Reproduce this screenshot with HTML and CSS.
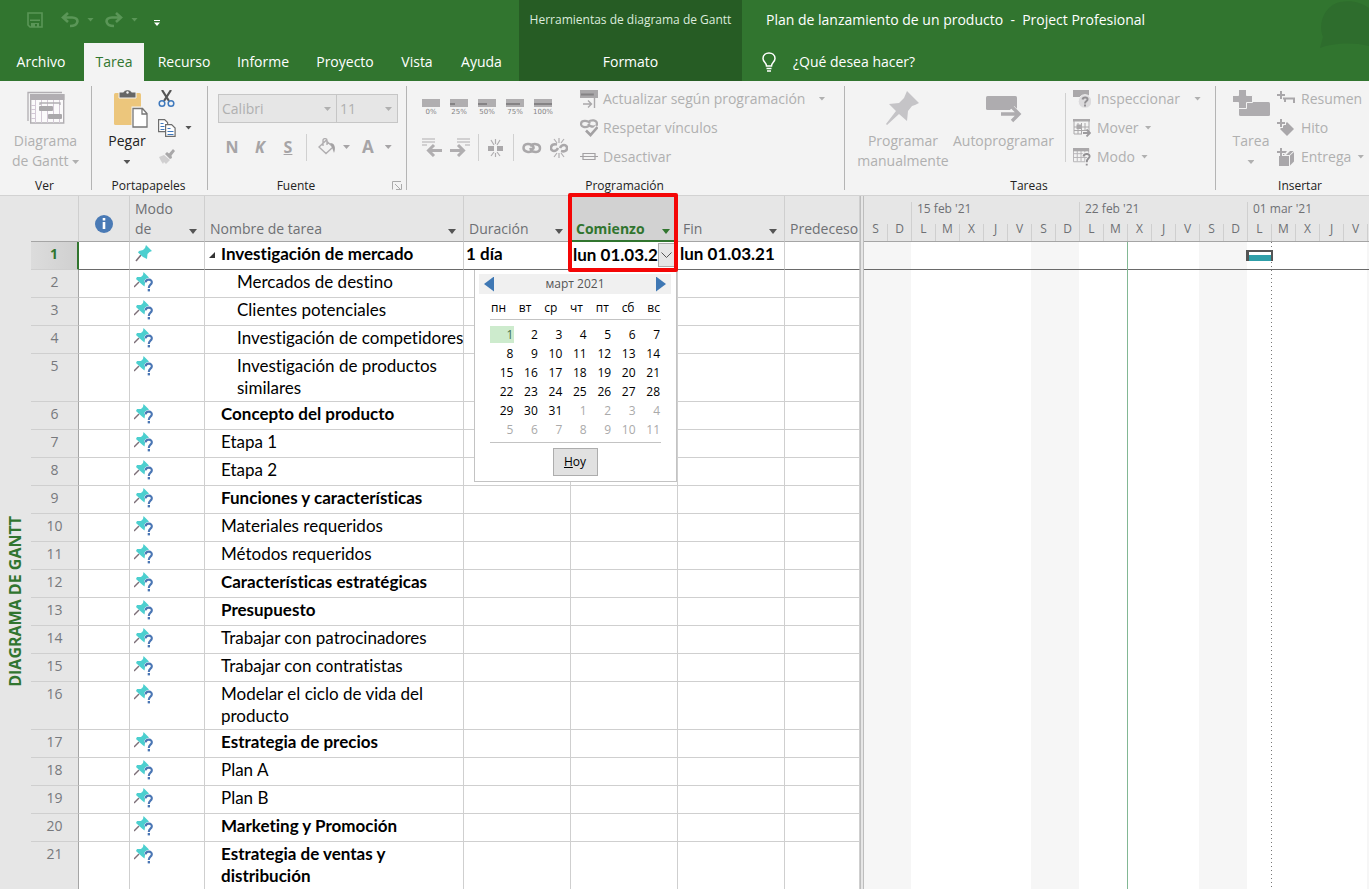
FILE: index.html
```html
<!DOCTYPE html>
<html lang="es">
<head>
<meta charset="utf-8">
<title>Plan de lanzamiento de un producto - Project Profesional</title>
<link rel="stylesheet" href="styles.css">
</head>
<body>
<svg class="defs" aria-hidden="true">
  <symbol id="pin" viewBox="0 0 34 34"><path d="M21 0L33 12L29 14L26 15L22 20L21 30L13 23L1 34L0 33L10 20L3 13L13 12L18 7Z"/></symbol>
  <symbol id="pinhead" viewBox="0 0 17 17"><path d="M1 16L6 10" stroke="#7d6f78" stroke-width="1.600"/><path fill="#4ccfcf" d="M11 0L17 6L14.500 7L12.500 9L12 14L8 12L3 7.500L4 6L8 5L10 3Z"/></symbol>
  <symbol id="pinq" viewBox="0 0 20 20"><path d="M0 15L5 10" stroke="#7d6f78" stroke-width="1.400"/><path fill="#4ccfcf" d="M9.500 0L15 5.500L12.500 7L11.500 8L10.500 14.500L8 12.500L2 7L3 5L7 5L9 3Z"/><path d="M11.500 10.300C12 6.500 18.300 7 17.800 10.500C17.500 13 14.800 12.500 14.800 16" fill="none" stroke="#fff" stroke-width="3"/><path d="M11.500 10.300C12 6.500 18.300 7 17.800 10.500C17.500 13 14.800 12.500 14.800 16" fill="none" stroke="#4a76b4" stroke-width="2.100"/><path fill="#4a76b4" d="M13.700 17h2.300v2.400h-2.300z"/></symbol>
</svg>

<header class="titlebar">
  <div class="bar-left">
    <div class="quick">
      <button class="q-save" aria-label="Guardar"><svg width="16" height="16" viewBox="0 0 16 16"><path fill="none" stroke="currentColor" stroke-width="1.600" d="M1 1h14v14H3L1 13z"/><path fill="currentColor" d="M3 7.500h10V9H3zM4 11h8v4h-2v-3H8v3H4z"/></svg></button>
      <button class="q-undo" aria-label="Deshacer"><svg width="18" height="16" viewBox="0 0 18 16"><path fill="none" stroke="currentColor" stroke-width="2.600" d="M7 1L2 5.500L7 10M2 5.500H11C19 5.500 18 14 9 14"/></svg><i class="caret"></i></button>
      <button class="q-redo" aria-label="Rehacer"><svg width="18" height="16" viewBox="0 0 18 16"><path fill="none" stroke="currentColor" stroke-width="2.600" d="M11 1L16 5.500L11 10M16 5.500H7C-1 5.500 0 14 9 14"/></svg><i class="caret"></i></button>
      <button class="q-more" aria-label="Personalizar"><svg width="6" height="6" viewBox="0 0 6 6"><path fill="#fff" d="M0 0h6v1H0zM0 2.500h6L3 6z"/></svg></button>
    </div>
    <nav class="tabs">
      <button class="tab t-file">Archivo</button>
      <button class="tab t-task active">Tarea</button>
      <button class="tab t-res">Recurso</button>
      <button class="tab t-inf">Informe</button>
      <button class="tab t-pro">Proyecto</button>
      <button class="tab t-vis">Vista</button>
      <button class="tab t-help">Ayuda</button>
    </nav>
  </div>
  <div class="context">
    <span class="context-title">Herramientas de diagrama de Gantt</span>
    <button class="tab">Formato</button>
  </div>
  <div class="bar-right">
    <h1 class="doc-title">Plan de lanzamiento de un producto&nbsp; -&nbsp; Project Profesional</h1>
    <button class="tell"><svg width="14" height="20" viewBox="0 0 14 20"><path fill="none" stroke="#fff" stroke-width="1.500" d="M4.500 14C4.500 10.500 1 10 1 6.500C1 -1 13 -1 13 6.500C13 10 9.500 10.500 9.500 14zM4.500 16.500h5M5 19h4"/></svg>¿Qué desea hacer?</button>
    <svg class="blob" width="51" height="52" viewBox="0 0 51 52"><path fill="#2e6d2d" d="M2 48L5 37C-1 22 8 5 22 2C34 0 42 2 51 8V46C36 42 14 43 2 48z"/></svg>
  </div>
</header>

<section class="ribbon" aria-label="Cinta de opciones">
  <div class="group g-view">
    <div class="tools">
      <button class="big off"><svg width="38" height="36" viewBox="0 0 38 36"><path fill="none" stroke="#b1aeb2" stroke-width="1.300" d="M35 1.500H1V30"/><path fill="#fbfafb" stroke="#b1aeb2" stroke-width="1.400" d="M3.700 4h33v28h-33z"/><path fill="#b1aeb2" d="M3 3h34.500v6H3z"/><path fill="none" stroke="#d3c9d6" d="M4 14.500h4M4 18.500h4M4 22.500h4M4 27.500h4M8.500 9v23M14.500 9v23M20.500 9v23M26.500 9v23M32.500 9v23"/><path fill="none" stroke="#b1aeb2" stroke-width="1.300" d="M13 14v-2h20v2"/><rect x="12" y="15" width="14" height="5" rx="1" fill="#aaa8ab"/><rect x="21" y="23" width="14" height="5" rx="1" fill="#aaa8ab"/></svg><span>Diagrama<br>de Gantt <i class="caret"></i></span></button>
    </div>
    <h2>Ver</h2>
  </div>
  <div class="group g-clip">
    <div class="tools">
      <button class="big"><svg width="36" height="40" viewBox="0 0 36 40"><rect x="1" y="3" width="27" height="32" rx="1.500" fill="#ecc67c"/><path fill="#666" stroke="#f3f3f3" d="M6 2h4.500C11-1 18-1 18.500 2H23v6H6z"/><circle cx="14.500" cy="2.500" r="1.200" fill="#f3f3f3"/><path fill="#fff" stroke="#f3f3f3" stroke-width="3" d="M20 18h9.500l5 5v14H20z"/><path fill="#fff" stroke="#767676" stroke-width="1.300" d="M20 18.500h9.500l4.500 5V37H20zM29 18.500V24h5"/></svg><span>Pegar<br><i class="caret"></i></span></button>
      <div class="stack">
        <button class="small" aria-label="Cortar"><svg width="17" height="18" viewBox="0 0 17 18"><path fill="none" stroke="#555" stroke-width="2.200" d="M4 0L11 11M13 0L6 11"/><g fill="#f3f3f3" stroke="#3f79bd" stroke-width="1.500"><circle cx="4" cy="13.500" r="2.800"/><circle cx="13" cy="13.500" r="2.800"/></g></svg></button>
        <button class="small" aria-label="Copiar"><svg width="18" height="18" viewBox="0 0 18 18"><g fill="#fff" stroke="#6d6d6d" stroke-width="1.200"><path d="M.600.600h6l3 3v9h-9z"/><path d="M7.600 5.600h6l3.500 3.500v8.300H7.600z"/></g><path stroke="#3f79bd" d="M2.500 4.500h3M2.500 7.500h4M2.500 10.500h4M9.500 9.500h3M9.500 12.500h6M9.500 15.500h6"/></svg><i class="caret"></i></button>
        <button class="small" aria-label="Copiar formato"><svg width="17" height="17" viewBox="0 0 17 17"><path fill="#d0cfd0" d="M1 9L6 7L12 12L8 16L6 14L5 16L3 13z"/><path fill="#a9a8a9" d="M7 6L9 4L11 5.500L15 1L17 3L13.500 7.500L14 10L12 11z"/></svg></button>
      </div>
    </div>
    <h2>Portapapeles</h2>
  </div>
  <div class="group g-font">
    <div class="tools">
      <div class="combos">
        <label class="combo c-name"><select disabled aria-label="Fuente"><option>Calibri</option></select><i class="caret"></i></label>
        <label class="combo c-size"><select disabled aria-label="Tamaño"><option>11</option></select><i class="caret"></i></label>
      </div>
      <div class="fmt off">
        <button class="f-let">N</button><button class="f-let it">K</button><button class="f-let un">S</button>
        <span class="sep"></span>
        <button class="f-wide" aria-label="Color de fondo"><svg width="18" height="18" viewBox="0 0 18 18"><path fill="none" stroke="#b0aeb0" stroke-width="1.400" d="M8 2.500L15 9L8 15.500L1 9zM5 8V2.500C5 0 9 0 9 2.500V7"/><path fill="#a3a1a3" d="M12 5C17 5 18 10 16 15C15 12 14 9 12 5z"/></svg><i class="caret"></i></button>
        <button class="f-wide f-a">A<i class="caret"></i></button>
      </div>
    </div>
    <h2>Fuente</h2>
    <button class="launch" aria-label="Opciones de fuente"><svg width="10" height="9" viewBox="0 0 10 9"><path fill="none" stroke="#aaa" d="M.500 8.500V.500H9M3 3l5 5M9.500 3v5.500H4"/></svg></button>
  </div>
  <div class="group g-prog">
    <div class="tools">
      <div class="prog-left off">
        <div class="pcts">
          <button class="pct">0%</button><button class="pct p25">25%</button><button class="pct p50">50%</button><button class="pct p75">75%</button><button class="pct p100">100%</button>
        </div>
        <div class="links">
          <button aria-label="Anular sangría"><svg width="20" height="19" viewBox="0 0 20 19"><path stroke="#b0aeb0" stroke-width="1.200" d="M0 1h13M0 4h13M0 7h5"/><path fill="none" stroke="#b0aeb0" stroke-width="3" d="M12 7L6.500 12.500L12 18M7 12.500H20"/></svg></button>
          <button aria-label="Aplicar sangría"><svg width="20" height="19" viewBox="0 0 20 19"><path stroke="#b0aeb0" stroke-width="1.200" d="M7 1h13M7 4h13M15 7h5"/><path fill="none" stroke="#b0aeb0" stroke-width="3" d="M8 7L13.500 12.500L8 18M13 12.500H0"/></svg></button>
          <span class="sep"></span>
          <button aria-label="Dividir tarea"><svg width="18" height="18" viewBox="0 0 18 18"><path fill="#aaa8aa" d="M1 7h6v5H1zM10 7h6v5h-6z"/><path fill="none" stroke="#b0aeb0" stroke-width="1.200" d="M8.500 0v5M4 1l3 5M13 1l-3 5M8.500 14v4M4 17l3-4M13 17l-3-4"/></svg></button>
          <span class="sep"></span>
          <button aria-label="Vincular tareas"><svg width="20" height="12" viewBox="0 0 20 12"><path fill="none" stroke="#aaa8aa" stroke-width="2.500" d="M11 8.500C8 11 1.500 10 1.500 6C1.500 1 9 .500 11.500 5C12 7 9 8 8 6M8 4C11 1 18 1.500 18 6C18 11 11 11.500 8.500 7"/></svg></button>
          <button aria-label="Desvincular tareas"><svg width="18" height="20" viewBox="0 0 18 20"><path fill="none" stroke="#aaa8aa" stroke-width="2.600" d="M7 6.500C-.500 5-.500 13 4 13C6 13 7 12 8 10M11 13C18.500 15 18.500 7 14 7C12 7 11 8 10 10"/><path fill="none" stroke="#b0aeb0" stroke-width="1.200" d="M9 0v5M4 1l3 4M14 1l-3 4M9 15v5M4 19l3-4M14 19l-3-4"/></svg></button>
        </div>
      </div>
      <div class="rows off">
        <button class="line"><svg width="18" height="18" viewBox="0 0 18 18"><path fill="#aaa8aa" d="M0 0h18v8H0z"/><path fill="none" stroke="#858385" stroke-width="2" d="M1 4.500h14"/><path fill="none" stroke="#aaa8aa" stroke-width="1.400" d="M14.500 0v18M3 14h8M8 10.500L11.500 14L8 17.500"/></svg>Actualizar según programación<i class="caret far"></i></button>
        <button class="line"><svg width="18" height="18" viewBox="0 0 18 18"><path fill="none" stroke="#aaa8aa" stroke-width="2.200" d="M9 7C5 9 1 8 1 5C1 1 8 1 10 4.500M8 3C11 .500 17 .500 17 5C17 8 11 9 8 5"/><path fill="none" stroke="#f3f3f3" stroke-width="5" d="M7 12L10.500 15.500L17.500 8"/><path fill="none" stroke="#a3a1a3" stroke-width="2.600" d="M6 11.500L10.500 16L17.500 8"/></svg>Respetar vínculos</button>
        <button class="line"><svg width="18" height="18" viewBox="0 0 18 18"><path fill="none" stroke="#a3a1a3" stroke-width="1.200" d="M3 5.500h12v6H3zM0 8.500h18"/></svg>Desactivar</button>
      </div>
    </div>
    <h2>Programación</h2>
  </div>
  <div class="group g-tasks">
    <div class="tools">
      <button class="big off b-manual"><svg width="34" height="36" viewBox="0 0 34 36" fill="#c5c4c7"><use href="#pin" y="0" width="34" height="34"/></svg><span>Programar<br>manualmente</span></button>
      <button class="big off b-auto"><svg width="36" height="36" viewBox="0 0 36 36"><rect x="0" y="5" width="31" height="14" rx="1.500" fill="#aeacaf"/><path fill="none" stroke="#f3f3f3" stroke-width="6" d="M14 23h18M26 17l6 6l-6 6"/><path fill="none" stroke="#aeacaf" stroke-width="3.400" d="M15 23h18M26 16l7 7l-7 7"/></svg><span>Autoprogramar</span></button>
      <span class="sep tall"></span>
      <div class="rows off">
        <button class="line"><svg width="18" height="18" viewBox="0 0 18 18"><path fill="#aaa8aa" d="M0 0h16v7H0z"/><circle cx="12" cy="11.500" r="6.800" fill="#dcdbdd" stroke="#f3f3f3"/><path fill="none" stroke="#929093" stroke-width="2" d="M9.500 9.500C10 6.500 15 7 14.500 9.500C14.500 11 12 11 12 13.500M12 14.500v2"/></svg>Inspeccionar<i class="caret far"></i></button>
        <button class="line"><svg width="18" height="18" viewBox="0 0 18 18"><path fill="none" stroke="#aaa8aa" d="M1 1h15v14H1zM1 8h15M1 11.500h15M5 4v11M8.500 4v11M12 4v11"/><path fill="#aaa8aa" d="M0 0h17v2.500H0zM3.500 5.500h4.500V10H3.500z"/><path fill="none" stroke="#f3f3f3" stroke-width="4" d="M9 14h7"/><path fill="none" stroke="#9d9b9e" stroke-width="1.800" d="M10 14h7M13.500 10.500L17 14L13.500 17.500"/></svg>Mover<i class="caret"></i></button>
        <button class="line"><svg width="18" height="18" viewBox="0 0 19 19"><path fill="none" stroke="#b5b3b6" d="M.500 1h16v13.500H.500zM.500 6h16M.500 10h16M4.500 3v11M8.500 3v11M12.500 3v11"/><path fill="#aaa8aa" d="M0 0h17v3.500H0z"/><path fill="none" stroke="#f3f3f3" stroke-width="4" d="M11 9C12 5 18 6 17.500 9C17.500 11 14.500 12 14.500 17"/><path fill="none" stroke="#929093" stroke-width="2" d="M11 9C12 5 18 6 17.500 9C17.500 11 14.500 11 14.500 15M14.500 16.500v2"/></svg>Modo<i class="caret"></i></button>
      </div>
    </div>
    <h2>Tareas</h2>
  </div>
  <div class="group g-ins">
    <div class="tools">
      <button class="big off"><svg width="37" height="36" viewBox="0 0 37 36"><rect x="6" y="12" width="31" height="14" rx="1.500" fill="#aeacaf"/><path fill="#aeacaf" stroke="#f3f3f3" d="M5.500-.500h8v6h6v7h-6v6h-8v-6h-6v-7h6z"/></svg><span>Tarea<br><i class="caret"></i></span></button>
      <div class="rows off">
        <button class="line"><svg width="18" height="18" viewBox="0 0 18 18"><path fill="none" stroke="#a9a7aa" stroke-width="2" d="M4 1v8M0 5h8M8 12V8M6 8.500h11V13"/></svg>Resumen</button>
        <button class="line"><svg width="18" height="18" viewBox="0 0 18 18"><path fill="#a9a7aa" d="M10 3L17 10L10 17L3 10z"/><path stroke="#f3f3f3" stroke-width="4" d="M4 0v9M0 4h9"/><path stroke="#a9a7aa" stroke-width="2" d="M4 0v8M0 4h8"/></svg>Hito</button>
        <button class="line"><svg width="18" height="18" viewBox="0 0 18 18"><path fill="#a9a7aa" d="M2 8h10v10H2zM13 7.500l4-3.500v9.500l-4 4zM3 7l4-4h3L7 7zM9 7l4-4h3.500l-4 4z"/><path stroke="#f3f3f3" stroke-width="4" d="M4 0v8M0 4h8"/><path stroke="#a9a7aa" stroke-width="2" d="M4 0v8M0 4h8"/></svg>Entrega<i class="caret"></i></button>
      </div>
    </div>
    <h2>Insertar</h2>
  </div>
</section>

<main class="work">
  <aside class="strip"><span>DIAGRAMA DE GANTT</span></aside>
  <div class="sheet">
    <table class="grid">
      <colgroup><col class="w-id"><col class="w-info"><col class="w-mode"><col class="w-name"><col class="w-date"><col class="w-date"><col class="w-date"><col class="w-pred"></colgroup>
      <thead>
        <tr>
          <th></th>
          <th class="h-info"><svg width="18" height="18" viewBox="0 0 18 18"><circle cx="9" cy="9" r="9" fill="#4a7ab5"/><path fill="#fff" d="M7.700 3h2.600v2.500H7.700zM7.700 7h2.600v7H7.700z"/></svg></th>
          <th><span class="two">Modo de</span><i class="caret"></i></th>
          <th>Nombre de tarea<i class="caret"></i></th>
          <th>Duración<i class="caret"></i></th>
          <th class="sel">Comienzo<i class="caret"></i></th>
          <th>Fin<i class="caret"></i></th>
          <th>Predeceso</th>
        </tr>
      </thead>
      <tbody>
        <tr class="b first"><td>1</td><td></td><td><svg class="pin1"><use href="#pinhead"/></svg></td><td class="parent">Investigación de mercado</td><td class="v">1 día</td><td class="edit"><div class="editor"><input value="lun 01.03.2" aria-label="Comienzo"><button aria-label="Abrir calendario"><svg width="11" height="6" viewBox="0 0 11 6"><path fill="none" stroke="#555" d="M.500.500l5 5l5-5"/></svg></button></div></td><td class="v">lun 01.03.21</td><td></td></tr>
        <tr class="l2"><td>2</td><td></td><td><svg><use href="#pinq"/></svg></td><td>Mercados de destino</td><td></td><td></td><td></td><td></td></tr>
        <tr class="l2"><td>3</td><td></td><td><svg><use href="#pinq"/></svg></td><td>Clientes potenciales</td><td></td><td></td><td></td><td></td></tr>
        <tr class="l2"><td>4</td><td></td><td><svg><use href="#pinq"/></svg></td><td class="one">Investigación de competidores</td><td></td><td></td><td></td><td></td></tr>
        <tr class="l2"><td>5</td><td></td><td><svg><use href="#pinq"/></svg></td><td>Investigación de productos similares</td><td></td><td></td><td></td><td></td></tr>
        <tr class="b"><td>6</td><td></td><td><svg><use href="#pinq"/></svg></td><td>Concepto del producto</td><td></td><td></td><td></td><td></td></tr>
        <tr><td>7</td><td></td><td><svg><use href="#pinq"/></svg></td><td>Etapa 1</td><td></td><td></td><td></td><td></td></tr>
        <tr><td>8</td><td></td><td><svg><use href="#pinq"/></svg></td><td>Etapa 2</td><td></td><td></td><td></td><td></td></tr>
        <tr class="b"><td>9</td><td></td><td><svg><use href="#pinq"/></svg></td><td>Funciones y características</td><td></td><td></td><td></td><td></td></tr>
        <tr><td>10</td><td></td><td><svg><use href="#pinq"/></svg></td><td>Materiales requeridos</td><td></td><td></td><td></td><td></td></tr>
        <tr><td>11</td><td></td><td><svg><use href="#pinq"/></svg></td><td>Métodos requeridos</td><td></td><td></td><td></td><td></td></tr>
        <tr class="b"><td>12</td><td></td><td><svg><use href="#pinq"/></svg></td><td>Características estratégicas</td><td></td><td></td><td></td><td></td></tr>
        <tr class="b"><td>13</td><td></td><td><svg><use href="#pinq"/></svg></td><td>Presupuesto</td><td></td><td></td><td></td><td></td></tr>
        <tr><td>14</td><td></td><td><svg><use href="#pinq"/></svg></td><td>Trabajar con patrocinadores</td><td></td><td></td><td></td><td></td></tr>
        <tr><td>15</td><td></td><td><svg><use href="#pinq"/></svg></td><td>Trabajar con contratistas</td><td></td><td></td><td></td><td></td></tr>
        <tr><td>16</td><td></td><td><svg><use href="#pinq"/></svg></td><td>Modelar el ciclo de vida del producto</td><td></td><td></td><td></td><td></td></tr>
        <tr class="b"><td>17</td><td></td><td><svg><use href="#pinq"/></svg></td><td>Estrategia de precios</td><td></td><td></td><td></td><td></td></tr>
        <tr><td>18</td><td></td><td><svg><use href="#pinq"/></svg></td><td>Plan A</td><td></td><td></td><td></td><td></td></tr>
        <tr><td>19</td><td></td><td><svg><use href="#pinq"/></svg></td><td>Plan B</td><td></td><td></td><td></td><td></td></tr>
        <tr class="b"><td>20</td><td></td><td><svg><use href="#pinq"/></svg></td><td>Marketing y Promoción</td><td></td><td></td><td></td><td></td></tr>
        <tr class="b"><td>21</td><td></td><td><svg><use href="#pinq"/></svg></td><td>Estrategia de ventas y distribución</td><td></td><td></td><td></td><td></td></tr>
      </tbody>
    </table>
    <div class="calendar">
      <div class="cal-head"><button aria-label="Mes anterior" class="prev"></button><span>март 2021</span><button aria-label="Mes siguiente" class="next"></button></div>
      <table class="cal">
        <thead><tr><th>пн</th><th>вт</th><th>ср</th><th>чт</th><th>пт</th><th>сб</th><th>вс</th></tr></thead>
        <tbody>
          <tr><td class="today">1</td><td>2</td><td>3</td><td>4</td><td>5</td><td>6</td><td>7</td></tr>
          <tr><td>8</td><td>9</td><td>10</td><td>11</td><td>12</td><td>13</td><td>14</td></tr>
          <tr><td>15</td><td>16</td><td>17</td><td>18</td><td>19</td><td>20</td><td>21</td></tr>
          <tr><td>22</td><td>23</td><td>24</td><td>25</td><td>26</td><td>27</td><td>28</td></tr>
          <tr><td>29</td><td>30</td><td>31</td><td class="o">1</td><td class="o">2</td><td class="o">3</td><td class="o">4</td></tr>
          <tr><td class="o">5</td><td class="o">6</td><td class="o">7</td><td class="o">8</td><td class="o">9</td><td class="o">10</td><td class="o">11</td></tr>
        </tbody>
      </table>
      <button class="hoy"><u>H</u>oy</button>
    </div>
    <div class="frame"></div>
  </div>
  <div class="splitter"></div>
  <section class="gantt" aria-label="Diagrama de Gantt">
    <div class="scale">
      <div class="weeks"><span class="wk part"></span><span class="wk">15 feb '21</span><span class="wk">22 feb '21</span><span class="wk">01 mar '21</span></div>
      <div class="days"><span>S</span><span>D</span><span>L</span><span>M</span><span>X</span><span>J</span><span>V</span><span>S</span><span>D</span><span>L</span><span>M</span><span>X</span><span>J</span><span>V</span><span>S</span><span>D</span><span>L</span><span>M</span><span>X</span><span>J</span><span>V</span><span></span></div>
    </div>
    <div class="chart">
      <div class="chart-row"></div>
      <div class="now"></div>
      <div class="start"></div>
      <div class="bar"></div>
    </div>
  </section>
</main>
</body>
</html>
```
FILE: styles.css
```css
* { box-sizing: border-box; }
body {
  margin: 0;
  height: 100vh;
  display: flex;
  flex-direction: column;
  overflow: hidden;
  font: 14px/20px "Open Sans", "Noto Sans", sans-serif;
  color: #222;
  background: #e6e6e6;
}
button, input, select { font: inherit; color: inherit; border: 0; padding: 0; margin: 0; background: none; }
h1, h2 { margin: 0; font-weight: 400; }
svg { flex: none; }
.defs { position: absolute; width: 0; height: 0; }
.caret {
  display: inline-block;
  flex: none;
  width: 7px;
  height: 4px;
  background: currentColor;
  clip-path: polygon(0 0, 100% 0, 50% 100%);
  vertical-align: middle;
}
.off { color: #b0b0b0; }
.sep { flex: none; width: 1px; height: 27px; background: #d0d0d0; }

/* Title bar and tabs */
.titlebar { flex: none; display: grid; grid-template-columns: 519px 223px 1fr; background: #31752f; color: #fff; }
.bar-left, .context, .bar-right { display: grid; grid-template-rows: 43px 38px; }
.quick { display: flex; align-items: center; padding: 0 0 4px 27px; color: #5a9657; }
.quick button { display: flex; align-items: center; gap: 8px; }
.q-save { width: 34px; }
.q-undo, .q-redo { width: 44px; }
.q-more { padding: 6px 0 0 5px; }
.quick svg { display: block; }
.tabs { display: flex; }
.tab { text-align: center; }
.t-file { width: 84px; padding-right: 2px; }
.t-task { width: 60px; }
.t-res { width: 80px; }
.t-inf { width: 78px; }
.t-pro { width: 86px; }
.t-vis { width: 58px; }
.t-help { width: 71px; }
.active { background: #f3f3f3; color: #31752f; }
.context { background: #265c24; }
.context-title { font-size: 12px; line-height: 40px; text-align: center; white-space: nowrap; color: #dcebdc; }
.bar-right { position: relative; padding-left: 20px; }
.doc-title { font-size: 14px; line-height: 40px; padding-left: 4px; white-space: nowrap; }
.tell { display: flex; align-items: center; gap: 17px; white-space: nowrap; }
.blob { position: absolute; top: 0; right: 0; }

/* Ribbon */
.ribbon { flex: none; display: flex; height: 115px; background: #f3f3f3; border-bottom: 1px solid #d2d2d2; overflow: hidden; }
.group {
  flex: none;
  position: relative;
  display: flex;
  flex-direction: column;
  background: linear-gradient(#b4b4b4, #b4b4b4) right 5px / 1px 104px no-repeat;
}
.tools { display: flex; flex: none; height: 95px; }
.group h2 { font-size: 12px; line-height: 20px; text-align: center; color: #222; padding-right: 3px; }
.g-view { width: 92px; }
.g-clip { width: 116px; }
.g-font { width: 199px; }
.g-prog { width: 438px; }
.g-tasks { width: 371px; }
.g-ins { width: 168px; background: none; }
.g-ins h2 { padding-right: 0; }
.big { display: flex; flex-direction: column; align-items: center; gap: 4px; padding-top: 10px; line-height: 20px; white-space: nowrap; }
.g-view .big { width: 91px; }
.g-clip .big { width: 62px; margin-left: 4px; padding-top: 9px; gap: 1px; }
.g-clip .big svg { margin-left: 8px; }
.g-clip .caret { color: #555; }
.big .caret { vertical-align: 2px; }
.stack { display: flex; flex-direction: column; padding-top: 3px; }
.small { display: flex; align-items: center; gap: 9px; height: 29px; }
.g-font .tools { flex-direction: column; padding-top: 13px; }
.g-font h2 { padding-right: 23px; }
.combos { display: flex; padding-left: 10px; }
.combo { position: relative; height: 29px; border: 1px solid #c6c6c6; background: #e6e6e6; color: #b0b0b0; }
.combo select { width: 100%; height: 100%; appearance: none; opacity: 1; padding-left: 3px; }
.combo .caret { position: absolute; right: 5px; top: 12px; }
.c-name { width: 119px; }
.c-size { width: 61px; border-left: 0; }
.fmt { display: flex; align-items: center; height: 48px; padding-left: 10px; color: #a6a4a6; }
.f-let { width: 28px; font-size: 16px; font-weight: 700; }
.it { font-style: italic; }
.un { text-decoration: underline; }
.fmt .sep { margin: 0 11px 0 4px; }
.f-wide { display: flex; align-items: center; gap: 7px; margin-right: 12px; }
.f-a { gap: 11px; font-size: 17px; font-weight: 700; }
.launch { position: absolute; right: 5px; bottom: 5px; line-height: 0; }
.prog-left { width: 173px; padding: 18px 0 0 15px; }
.pcts { display: flex; gap: 10px; }
.pct {
  width: 18px;
  height: 19px;
  padding-top: 9px;
  display: flex;
  justify-content: center;
  font: 7px/9px "DejaVu Sans", sans-serif;
  color: #858385;
  background: linear-gradient(#858385, #858385) 0 4px / 0 2px no-repeat, linear-gradient(#b0aeb0, #b0aeb0) 0 0 / 18px 8px no-repeat;
}
.p25 { background-size: 5px 2px, 18px 8px; }
.p50 { background-size: 9px 2px, 18px 8px; }
.p75 { background-size: 14px 2px, 18px 8px; }
.p100 { background-size: 18px 2px, 18px 8px; }
.links { display: flex; align-items: center; gap: 8px; height: 27px; margin-top: 16px; }
.links button { line-height: 0; }
.rows { display: flex; flex-direction: column; padding-top: 3px; }
.line { display: flex; align-items: center; gap: 5px; height: 29px; white-space: nowrap; }
.far { margin-left: 8px; }
.b-manual { width: 94px; margin-left: 11px; }
.b-auto { width: 107px; }
.tall { height: 69px; margin: 12px 7px 0 8px; }
.g-ins .big { width: 50px; margin-left: 10px; padding-top: 9px; gap: 5px; }
.g-ins .rows { padding-left: 1px; }
.g-ins .line, .g-tasks .line { gap: 6px; }

/* Work area */
.work { flex: 1; min-height: 0; display: flex; }
.strip { flex: none; width: 31px; display: flex; align-items: flex-end; justify-content: center; padding-bottom: 202px; }
.strip span { writing-mode: vertical-rl; rotate: 180deg; font-size: 16px; line-height: 31px; font-weight: 700; color: #31752f; white-space: nowrap; }
.sheet { flex: none; position: relative; width: 829px; }
.grid { width: 829px; table-layout: fixed; border-spacing: 0; font: 17px/22px Lato, "Open Sans", sans-serif; font-variant-ligatures: none; color: #000; background: #fff; }
.w-id { width: 48px; }
.w-info { width: 51px; }
.w-mode { width: 75px; }
.w-name { width: 259px; }
.w-date { width: 107px; }
.w-pred { width: 75px; }
.grid th {
  position: relative;
  height: 46px;
  padding: 0 0 2px 5px;
  vertical-align: bottom;
  text-align: left;
  white-space: nowrap;
  overflow: hidden;
  font: 14px/20px "Open Sans", sans-serif;
  color: #6e7074;
  background: #e6e6e6;
  border-right: 1px solid #cfcfcf;
  border-bottom: 1px solid #a5a5a5;
}
.grid th .caret { position: absolute; right: 7px; bottom: 7px; width: 8px; height: 5px; color: #555; }
.grid .h-info { text-align: center; vertical-align: middle; padding: 10px 0 0; line-height: 0; }
.two { display: block; width: 48px; white-space: normal; }
.grid .sel { background: #d2d2d2; color: #31752f; font-weight: 700; border-bottom: 2px solid #31752f; padding-bottom: 1px; }
.grid .sel .caret { color: #31752f; bottom: 6px; }
.grid td { height: 28px; padding: 1px 0 2px; vertical-align: top; border-right: 1px solid #cfcfcf; border-bottom: 1px solid #cfcfcf; }
.grid td:first-child { background: #e6e6e6; text-align: center; font: 14px/22px "Open Sans", sans-serif; color: #77797d; border-right-color: #a5a5a5; }
.grid td:nth-child(4) { padding-left: 16px; }
.grid .l2 td:nth-child(4) { padding-left: 32px; }
.one { white-space: nowrap; }
.b { font-weight: 700; }
.grid td svg { display: block; width: 20px; height: 20px; margin: 1px 0 0 4px; }
.grid .first td { border-bottom-color: #6a6a6a; }
.grid .first td:first-child { background: linear-gradient(90deg, #dcdcdc, #d0d0d0); border-right: 2px solid #31752f; border-bottom-color: #cfcfcf; color: #31752f; font-weight: 700; }
.grid td .pin1 { width: 17px; height: 17px; margin: 2px 0 0 5px; }
.parent::before { content: ""; float: left; width: 6px; height: 6px; margin: 9px 0 0 -12px; background: #333; clip-path: polygon(100% 0, 100% 100%, 0 100%); }
.grid .v { padding-left: 2px; }
.grid .edit { padding: 0; }
.editor { display: flex; height: 27px; padding-left: 2px; }
.editor input { flex: 1; min-width: 0; height: 24px; }
.editor button { width: 17px; height: 24px; margin: 1px 2px 0 0; background: #e6e6e6; border: 1px solid #adadad; }
.grid .editor button svg { width: 11px; height: 6px; margin: 0 auto; }
.frame { position: absolute; left: 537px; top: -3px; width: 110px; height: 79px; border: 4px solid #f40606; border-radius: 2px; }

/* Date picker */
.calendar { position: absolute; left: 443px; top: 74px; width: 203px; padding: 4px 5px 5px 4px; background: #fff; border: 1px solid #c3c3c3; border-top: 0; font-size: 12px; text-align: center; }
.cal-head { display: flex; align-items: center; justify-content: space-between; height: 20px; padding: 0 5px; background: #f0f0f0; color: #555; }
.prev, .next { width: 10px; height: 15px; background: #3f78b4; }
.prev { clip-path: polygon(100% 0, 100% 100%, 0 50%); }
.next { clip-path: polygon(0 0, 100% 50%, 0 100%); }
.cal { display: block; margin: 0 10px 0 11px; padding-bottom: 3px; border-bottom: 1px solid #c3c3c3; color: #000; line-height: 19px; }
.cal thead, .cal tbody { display: block; }
.cal thead tr { display: flex; justify-content: space-between; padding: 4px 1px 2px; border-bottom: 1px solid #c3c3c3; }
.cal tbody { padding-top: 5px; }
.cal tbody tr { display: grid; grid-template-columns: repeat(7, 1fr); }
.cal th, .cal td { padding: 0; font-weight: 400; }
.cal td { text-align: right; padding-right: 1px; }
.cal .today { background: #cdebcd; color: #44704a; height: 17px; line-height: 17px; margin-top: 1px; }
.cal .o { color: #aaa; }
.hoy { width: 45px; height: 28px; margin-top: 5px; border: 1px solid #adadad; background: #e1e1e1; color: #000; }

/* Gantt chart */
.splitter { flex: none; width: 4px; background: #e6e6e6; border: solid #bdbdbd; border-width: 0 1px; }
.gantt { flex: 1; min-width: 0; display: flex; flex-direction: column; overflow: hidden; font-size: 12px; color: #6e7074; }
.scale { flex: none; height: 46px; border-bottom: 1px solid #a5a5a5; padding-top: 6px; overflow: hidden; }
.weeks, .days { display: flex; }
.wk { flex: none; width: 168px; height: 22px; line-height: 14px; padding-left: 5px; border-left: 1px solid #d0d0d0; }
.part { width: 47px; border: 0; }
.days span { flex: none; width: 24px; height: 18px; line-height: 10px; text-align: center; border-right: 1px solid #cfcfcf; }
.chart { flex: 1; position: relative; background: #fff linear-gradient(90deg, #f6f6f6 48px, #fff 48px) -1px 0 / 168px 100%; }
.chart-row { height: 28px; border-bottom: 1px solid #6a6a6a; }
.now, .start, .bar { position: absolute; top: 0; }
.now { left: 263px; height: 100%; width: 1px; background: #82b894; }
.start { left: 407px; height: 100%; width: 1px; background: repeating-linear-gradient(#777 0 1px, transparent 1px 4px); }
.bar { left: 382px; top: 8px; width: 27px; height: 11px; border: solid #555; border-width: 2px 2px 0 3px; background: linear-gradient(#fff 3px, #2f9fa9 3px); }
```
